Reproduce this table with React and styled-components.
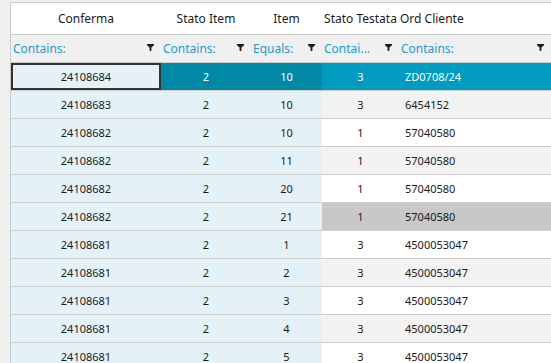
import styled, { createGlobalStyle } from "styled-components";

const GlobalStyle = createGlobalStyle`
  html, body {
    margin: 0;
    padding: 0;
    background: #f0f0f0;
    font-family: "Noto Sans", "Open Sans", sans-serif;
    overflow: hidden;
  }
`;

const columns = [
  { key: "conferma", title: "Conferma", filter: "Contains:", align: "center", frozen: true },
  { key: "statoItem", title: "Stato Item", filter: "Contains:", align: "center", frozen: true },
  { key: "item", title: "Item", filter: "Equals:", align: "center", frozen: true },
  { key: "statoTestata", title: "Stato Testata", filter: "Contai...", align: "center" },
  { key: "ordCliente", title: "Ord Cliente", filter: "Contains:", align: "left" },
];

const rows = [
  ["24108684", "2", "10", "3", "ZD0708/24"],
  ["24108683", "2", "10", "3", "6454152"],
  ["24108682", "2", "10", "1", "57040580"],
  ["24108682", "2", "11", "1", "57040580"],
  ["24108682", "2", "20", "1", "57040580"],
  ["24108682", "2", "21", "1", "57040580"],
  ["24108681", "2", "1", "3", "4500053047"],
  ["24108681", "2", "2", "3", "4500053047"],
  ["24108681", "2", "3", "3", "4500053047"],
  ["24108681", "2", "4", "3", "4500053047"],
  ["24108681", "2", "5", "3", "4500053047"],
];

const SELECTED = 0;
const HOVERED = 5;

function FilterIcon() {
  return (
    <svg width="7" height="7" viewBox="0 0 7 7">
      <path d="M0 0H7V1.2L4.4 3.6V7H2.6V3.6L0 1.2Z" fill="#1e1e1e" />
    </svg>
  );
}

function cellTone(rowIndex, col) {
  if (rowIndex === SELECTED) {
    if (col.key === "conferma") return "current";
    return col.frozen ? "selectedFrozen" : "selected";
  }
  if (col.frozen) return "frozen";
  if (rowIndex === HOVERED) return "hover";
  return rowIndex % 2 === 1 ? "alt" : "plain";
}

export default function App() {
  return (
    <>
      <GlobalStyle />
      <Page>
        <Grid>
          {columns.map((col) => (
            <HeaderCell key={col.key} $align={col.align}>
              {col.title}
            </HeaderCell>
          ))}
          {columns.map((col) => (
            <FilterCell key={col.key}>
              <FilterText>{col.filter}</FilterText>
              <FilterIcon />
            </FilterCell>
          ))}
          {rows.map((row, r) =>
            columns.map((col, c) => (
              <Cell key={`${r}-${c}`} $align={col.align} $tone={cellTone(r, col)}>
                {row[c]}
              </Cell>
            ))
          )}
        </Grid>
      </Page>
    </>
  );
}

const tones = {
  plain: { bg: "#ffffff", fg: "#1a1a1a" },
  alt: { bg: "#f2f2f2", fg: "#1a1a1a" },
  hover: { bg: "#c8c8c8", fg: "#1a1a1a" },
  frozen: { bg: "#e4f2f7", fg: "#1a1a1a" },
  current: { bg: "#e4f2f7", fg: "#1a1a1a" },
  selectedFrozen: { bg: "#0088a5", fg: "#ffffff" },
  selected: { bg: "#009bbf", fg: "#ffffff" },
};

const Page = styled.div`
  height: 363px;
  padding: 2px 0 0 10px;
  box-sizing: border-box;
`;

const Grid = styled.div`
  display: grid;
  grid-template-columns: 150px 90px 71px 77px 1fr;
  border-left: 1px solid #cbcbcb;
  border-top: 1px solid #cbcbcb;
  background: #ffffff;
`;

const HeaderCell = styled.div`
  height: 31px;
  display: flex;
  align-items: center;
  justify-content: ${(p) => (p.$align === "left" ? "flex-start" : "center")};
  padding: 0 ${(p) => (p.$align === "left" ? "1px" : "0")};
  background: #ffffff;
  border-bottom: 1px solid #cbcbcb;
  font-size: 12px;
  color: #1a1a1a;
  white-space: nowrap;
`;

const FilterCell = styled.div`
  height: 27px;
  display: flex;
  align-items: center;
  justify-content: space-between;
  padding: 0 7px 0 2px;
  background: #f0f0f0;
  border-bottom: 1px solid #cbcbcb;
  min-width: 0;

  svg {
    flex-shrink: 0;
    margin-top: -3px;
  }
`;

const FilterText = styled.span`
  font-size: 12px;
  color: #1c9ccb;
  white-space: nowrap;
  overflow: hidden;
`;

const Cell = styled.div`
  height: 27px;
  display: flex;
  align-items: center;
  justify-content: ${(p) => (p.$align === "left" ? "flex-start" : "center")};
  padding-left: ${(p) => (p.$align === "left" ? "6px" : "0")};
  background: ${(p) => tones[p.$tone].bg};
  color: ${(p) => tones[p.$tone].fg};
  border-bottom: 1px solid #cfcfcf;
  box-shadow: ${(p) => (p.$tone === "current" ? "inset 0 0 0 2px #333333" : "none")};
  font-size: 11px;
  white-space: nowrap;
`;
